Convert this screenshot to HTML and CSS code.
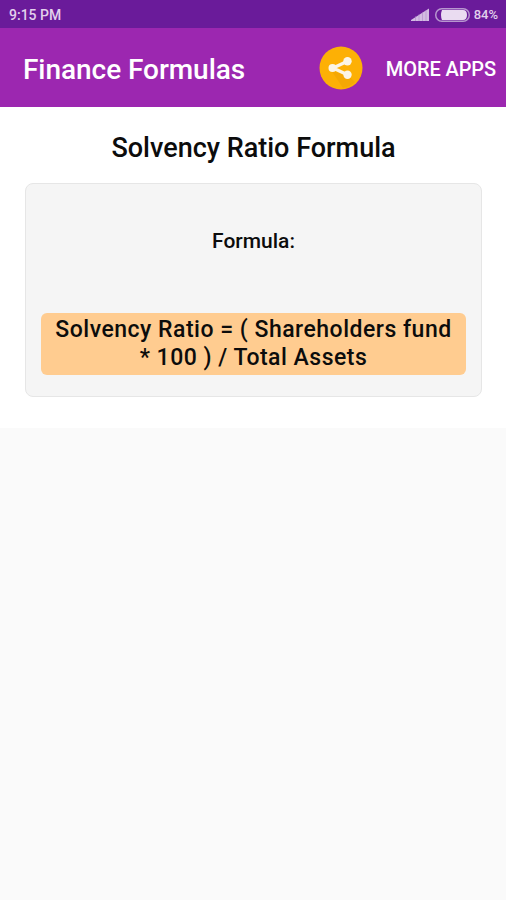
FILE: index.html
```html
<!DOCTYPE html>
<html lang="en">
  <head>
    <meta charset="UTF-8">
    <title>Finance Formulas</title>
    <meta name="viewport" content="width=device-width, initial-scale=1.0">
    <link rel="stylesheet" href="styles.css">
  </head>

  <body>
    <div class="status-bar">
      <span class="time">9:15 PM</span>
      <svg class="signal" width="18" height="13" viewBox="0 0 18 13">
        <path d="M0 13V12L18 0.5V13Z" fill="#d3bce2" />
        <path d="M4.5 8V13M8 6V13M11.5 4V13M15 2V13" stroke="#a67cc4" stroke-width="0.5" />
      </svg>
      <svg class="battery" width="35" height="14" viewBox="0 0 35 14">
        <rect x="0.75" y="0.75" width="33.5" height="12.5" rx="6" fill="none" stroke="#b796cf" stroke-width="1.5" />
        <path d="M7 2H28Q32 2 32 7T28 12H7Q5 7 7 2Z" fill="#eadcf1" />
      </svg>
      <span class="percent">84%</span>
    </div>

    <header class="toolbar">
      <h1>Finance Formulas</h1>
      <a class="share" aria-label="Share">
        <svg width="44" height="44" viewBox="0 0 44 44">
          <circle cx="22" cy="22" r="21.5" fill="#fdb005" />
          <path d="M14 25L30 30.5L36 36A20 20 0 0 1 24 42L12 24Z" fill="#f5a804" />
          <path d="M29 15L14 22L29 29" fill="none" stroke="#fcf5e6" stroke-width="3.2" />
          <circle cx="13.5" cy="22" r="4" fill="#fcf5e6" />
          <circle cx="28.5" cy="15.3" r="4.2" fill="#fcf5e6" />
          <circle cx="28.5" cy="28.7" r="4.2" fill="#fcf5e6" />
        </svg>
      </a>
      <a class="more">MORE APPS</a>
    </header>

    <main class="content">
      <h2>Solvency Ratio Formula</h2>
      <div class="card">
        <p class="label">Formula:</p>
        <p class="formula">Solvency Ratio = ( Shareholders fund * 100 ) / Total Assets</p>
      </div>
    </main>
  </body>
</html>
```
FILE: styles.css
```css
* {
  box-sizing: border-box;
}

body {
  margin: 0;
  min-height: 100vh;
  font-family: Roboto, sans-serif;
  font-weight: 500;
  color: #0c0c0c;
  background-color: #fafafa;
}

h1,
h2,
p {
  margin: 0;
  font-weight: 500;
}

.status-bar {
  display: flex;
  align-items: center;
  height: 28px;
  padding: 1px 8px 0 9px;
  font-size: 14px;
  color: #e2d0ec;
  background-color: #6a1b9a;
}

.time {
  margin-right: auto;
}

.signal {
  margin-right: 6px;
}

.battery {
  margin-right: 4px;
}

.percent {
  font-size: 13px;
}

.toolbar {
  display: flex;
  align-items: center;
  height: 79px;
  padding: 0 10px 0 23px;
  color: #fff;
  background-color: #9c27b0;
}

.toolbar h1 {
  margin-right: auto;
  padding-top: 3px;
  font-size: 28px;
  letter-spacing: -0.05px;
}

.share {
  height: 44px;
  margin-right: 23px;
}

.more {
  padding-top: 2px;
  font-size: 20px;
  letter-spacing: -0.1px;
}

.content {
  height: 321px;
  padding: 25px 24px 0 25px;
  text-align: center;
  background-color: #fff;
}

.content h2 {
  font-size: 27px;
  line-height: 32px;
}

.card {
  height: 214px;
  margin-top: 19px;
  padding: 44px 15px 0;
  border: 1px solid #e6e6e6;
  border-radius: 8px;
  background-color: #f5f5f5;
}

.label {
  font-size: 21px;
  line-height: 26px;
}

.formula {
  height: 62px;
  margin-top: 59px;
  padding: 3px 10px;
  border-radius: 6px;
  font-size: 23px;
  line-height: 28px;
  letter-spacing: 0.5px;
  background-color: #ffcc90;
}
```
